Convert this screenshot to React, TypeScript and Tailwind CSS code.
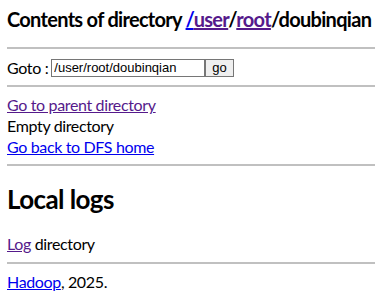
export default function App() {
  return (
    <div className="bg-white min-h-screen px-[7px] text-[16px] text-black font-['Lato',sans-serif] leading-[21px] tracking-[-0.35px]">
      <h1 className="pt-[7px] text-[20px] font-bold leading-[24px] tracking-[-0.7px] whitespace-nowrap">
        Contents of directory{" "}
        <a href="#" className="text-[#0000ee] underline">/</a>
        <a href="#" className="text-[#551a8b] underline">user</a>/
        <a href="#" className="text-[#551a8b] underline">root</a>/doubinqian
      </h1>
      <hr className="mt-[16px] border-t-2 border-[#c0c0c0]" />
      <div className="mt-[8px] flex items-center gap-[3px]">
        <span>Goto :</span>
        <input
          type="text"
          defaultValue="/user/root/doubinqian"
          className="w-[154px] h-[18px] border border-[#767676] px-[2px] text-[13px] tracking-normal font-['Liberation_Sans',sans-serif] outline-none"
        />
        <button className="-ml-[3px] h-[18px] px-[6px] border border-[#767676] bg-[#efefef] text-[13px] tracking-normal font-['Liberation_Sans',sans-serif] leading-[14px]">
          go
        </button>
      </div>
      <hr className="mt-[7px] border-t-2 border-[#c0c0c0]" />
      <div className="mt-[7px] flex flex-col">
        <a href="#" className="text-[#551a8b] underline">Go to parent directory</a>
        <span>Empty directory</span>
        <a href="#" className="text-[#0000ee] underline">Go back to DFS home</a>
      </div>
      <hr className="mt-[7px] border-t-2 border-[#c0c0c0]" />
      <h2 className="mt-[18px] text-[26px] font-bold leading-[30px] tracking-[-0.6px]">Local logs</h2>
      <p className="mt-[19px]">
        <a href="#" className="text-[#551a8b] underline">Log</a> directory
      </p>
      <hr className="mt-[8px] border-t-2 border-[#c0c0c0]" />
      <p className="mt-[7px]">
        <a href="#" className="text-[#0000ee] underline">Hadoop</a>, 2025.
      </p>
    </div>
  );
}
